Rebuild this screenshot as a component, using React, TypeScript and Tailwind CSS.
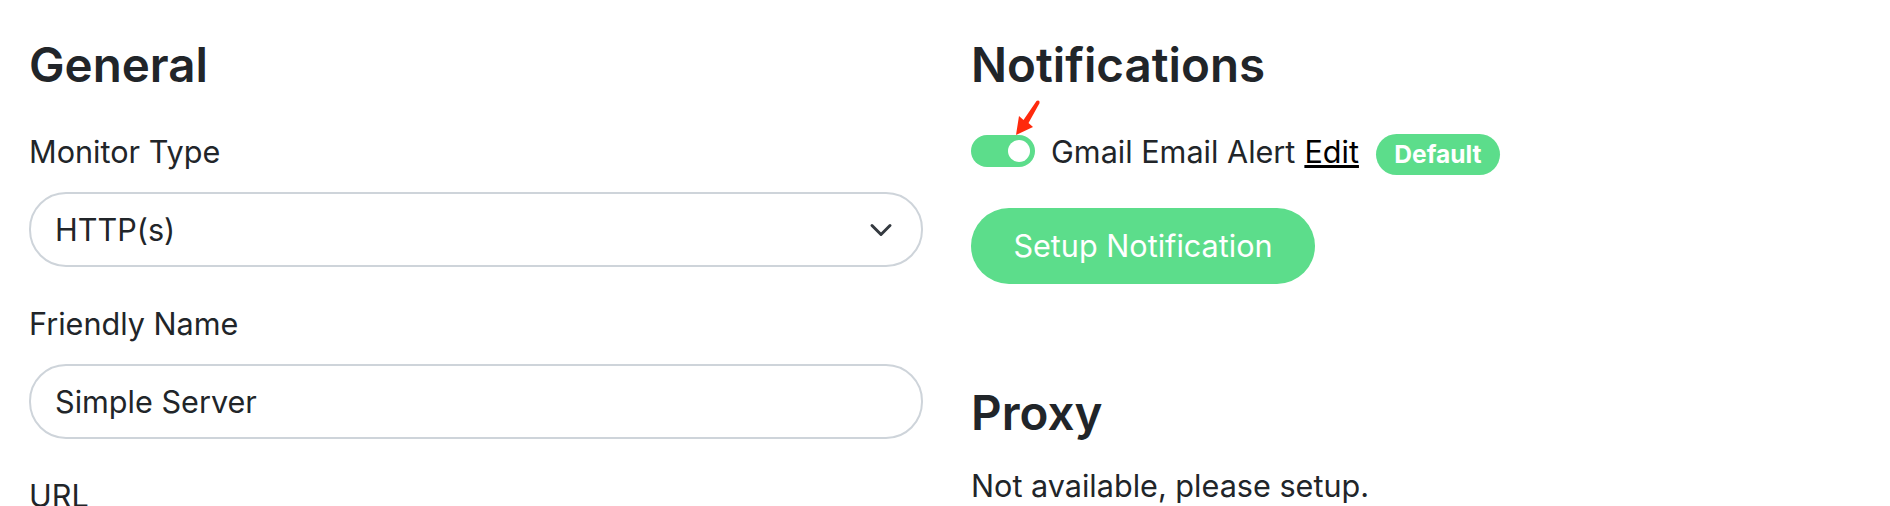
const font = { fontFamily: 'Inter, "Liberation Sans", sans-serif' };

function Field({ label, children }: { label: string; children?: React.ReactNode }) {
  return (
    <div className="mb-[36px]">
      <label className="mb-[20px] block text-[30.6px] leading-[41px]">{label}</label>
      {children}
    </div>
  );
}

function Arrow() {
  return (
    <svg
      className="absolute left-[43px] top-[-37px] h-[40px] w-[28px]"
      viewBox="0 0 28 40"
      aria-hidden="true"
    >
      <path
        d="M2 37 L5 18 L9.5 22 L22.5 3 Q24.5 2 25.5 3.5 Q26 5 24.5 7 L14.5 25 L19 29 Z"
        fill="#ff2a0d"
      />
    </svg>
  );
}

export default function App() {
  return (
    <div
      className="flex h-[506px] gap-[48px] overflow-hidden bg-white pl-[29px] pt-[36px] text-[#212529]"
      style={font}
    >
      <section className="w-[894px] shrink-0">
        <h2 className="mb-[37px] text-[47.5px] font-semibold leading-[58px]">General</h2>
        <Field label="Monitor Type">
          <div className="flex h-[75px] items-center justify-between rounded-[37px] border-2 border-[#ced4da] pl-[24px] pr-[28px] text-[30.6px]">
            <span>HTTP(s)</span>
            <svg className="size-[24px]" viewBox="0 0 16 16" fill="none" aria-hidden="true">
              <path d="M2 5l6 6 6-6" stroke="#343a40" strokeWidth="2" strokeLinecap="round" strokeLinejoin="round" />
            </svg>
          </div>
        </Field>
        <Field label="Friendly Name">
          <div className="flex h-[75px] items-center rounded-[37px] border-2 border-[#ced4da] pl-[24px] text-[30.6px]">
            Simple Server
          </div>
        </Field>
        <Field label="URL" />
      </section>

      <section className="flex-1">
        <h2 className="mb-[34px] text-[47.5px] font-semibold leading-[58px]">Notifications</h2>
        <div className="flex items-center text-[30.6px] leading-[41px]">
          <div className="relative mr-[16px] flex h-[32px] w-[64px] items-center justify-end rounded-full bg-[#5cdd8b] pr-[5px]">
            <span className="size-[22px] rounded-full bg-white" />
            <Arrow />
          </div>
          <span>Gmail Email Alert</span>
          <a className="ml-[9px] text-[#000] underline">Edit</a>
          <span className="ml-[17px] mt-[5px] flex h-[41px] w-[124px] translate-y-[1px] items-center justify-center rounded-full bg-[#5cdd8b] text-[24.6px] font-bold leading-none text-white">
            Default
          </span>
        </div>
        <button className="mt-[34px] block h-[76px] w-[344px] rounded-[38px] bg-[#5cdd8b] text-[30.6px] text-white">
          Setup Notification
        </button>
        <h2 className="mb-[23px] mt-[100px] text-[47.5px] font-semibold leading-[58px]">Proxy</h2>
        <p className="text-[30.6px] leading-[41px]">Not available, please setup.</p>
      </section>
    </div>
  );
}
